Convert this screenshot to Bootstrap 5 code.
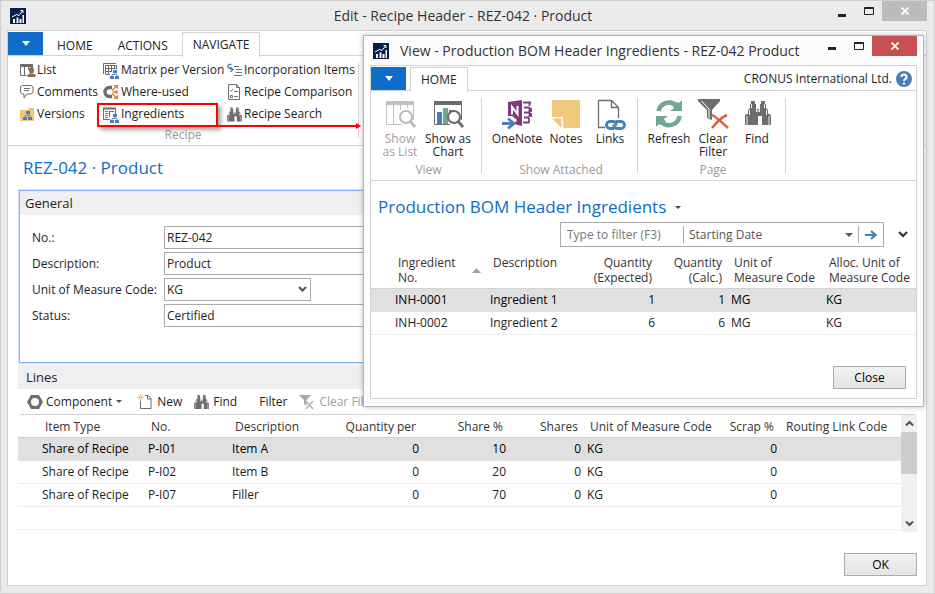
<!DOCTYPE html>
<html lang="en">
<head>
<meta charset="utf-8">
<meta name="viewport" content="width=device-width, initial-scale=1">
<title>Edit - Recipe Header - REZ-042 · Product</title>
<link rel="stylesheet" href="https://cdn.jsdelivr.net/npm/bootstrap@5.3.0/dist/css/bootstrap.min.css">
<style>
:root { --line:#d2d2d2; --field:#ababab; --nav:#0f6cc9; --panel:#efefef; --ink:#1e1e1e; }
body { font-family:"Open Sans","Noto Sans",sans-serif; font-size:12px; line-height:16px; color:var(--ink); background:#ebebeb; }
button { color:inherit; }
svg { display:block; flex:none; }
.plain { background:none; border:0; padding:0; }

/* windows */
.win-main { min-height:100vh; border:1px solid #d0d0d0; padding:0 7px 7px 6px; }
.win-pop { position:absolute; left:363px; right:11px; top:35px; background:#fcfcfc; border:1px solid #b4b4b4; padding:0 6px 7px; box-shadow:0 0 5px rgba(0,0,0,.28); z-index:5; }
.caption { height:29px; font-size:14px; line-height:20px; color:#333; padding-left:3px; }
.win-pop .caption { gap:11px; }
.caption-btns { height:21px; }
.win-btn { width:27px; height:19px; display:flex; align-items:center; justify-content:center; }
.win-close { width:45px; height:20px; color:#fff; background:#bcbcbc; }
.win-pop .win-close { background:#c75050; }
.surface { background:#fff; border:1px solid var(--line); }

/* ribbon */
.tabs { height:25px; border-bottom:1px solid var(--line); padding-top:1px; }
.tabs-main { gap:3px; }
.file-btn { width:35px; background:var(--nav); color:#fff; height:23px; display:flex; align-items:center; justify-content:center; }
.tab { height:24px; padding:0 10px; line-height:26px; color:#222; border:1px solid transparent; border-bottom:0; }
.tab.active { background:#fff; border-color:var(--line); height:25px; line-height:24px; }
.ribbon { height:90px; border-bottom:1px solid var(--line); }
.grp { border-right:1px solid var(--line); margin:7px 0; }
.grp-label { color:#9b9b9b; line-height:16px; text-align:center; }
.cmd-cols { margin:-4px 0 2px; padding-left:4px; }
.cmd { display:flex; align-items:center; gap:2px; height:22px; white-space:nowrap; }
.rib-a { width:83px; }
.rib-b { width:124px; }
.rib-c { width:123px; }
.rib-a .cmd { gap:1px; }
.big { display:flex; flex-direction:column; align-items:center; text-align:center; line-height:13px; gap:2px; height:64px; white-space:nowrap; }
.muted { color:#a0a0a0; }
.marked { position:relative; }
.marked-box { position:absolute; left:-6px; top:0; width:121px; height:24px; border:2px solid #f00; box-shadow:3px 3px 4px rgba(0,0,0,.35); pointer-events:none; }
.marked-arrow { position:absolute; left:114px; top:19px; pointer-events:none; }
.g-view { width:111px; padding-left:5px; }
.g-attach { width:156px; padding-left:3px; }
.g-page { width:148px; padding-left:3px; }
.big-s { width:42px; }
.big-m { width:46px; }
.big-l { width:48px; }
.big-xl { width:52px; }
.tab-pop { margin-left:4px; }

/* page */
.body-pad { padding:10px 9px 9px 10px; }
.body-pad .page-title { padding-left:5px; }
.page-title { color:var(--nav); font-size:17px; line-height:24px; font-weight:400; margin:0; }
.fast-tab { border:1px solid #82b1f5; box-shadow:0 0 0 1px #d4e4fc; height:173px; margin:10px 0 2px 1px; }
.fast-head { background:var(--panel); font-size:13px; height:24px; line-height:24px; padding-left:5px; margin:0; font-weight:400; }
.form-pad { padding:11px 0 0 12px; }
.field-row { display:flex; align-items:center; margin-bottom:3px; }
.field-row label { width:132px; }
.field { height:23px; border:1px solid var(--field); padding:0 2px; color:var(--ink); background-color:#fff; flex:1; min-width:0; border-radius:0; }
.field-sel { flex:none; width:147px; appearance:none; background-repeat:no-repeat; background-position:right 3px center; background-image:url("data:image/svg+xml,%3Csvg xmlns='http://www.w3.org/2000/svg' width='9' height='7'%3E%3Cpath d='M1 1l3.500 3.500L8 1' fill='none' stroke='%23505050' stroke-width='2'/%3E%3C/svg%3E"); }
.tool-row { height:26px; border-bottom:1px solid var(--line); margin:0 2px; padding-left:7px; }
.tool { display:flex; align-items:center; gap:4px; white-space:nowrap; }
.tool-comp { gap:3px; margin-right:15px; }
.tool-new { margin-right:12px; }
.tool-find { margin-right:22px; }
.tool-filter { margin-right:12px; }

.grid { table-layout:fixed; width:100%; margin:0; border-collapse:separate; border-spacing:0; }
.grid th { font-weight:400; padding:1px 6px 0; white-space:nowrap; border-bottom:1px solid var(--line); height:23px; vertical-align:middle; color:#333; }
.grid td { padding:0 3px; height:23px; white-space:nowrap; border-bottom:1px solid #ececec; color:#222; }
.grid .sel td { background:#e0e0e0; border-color:#e0e0e0; color:#000; }
.grid .tall th { line-height:15px; height:34px; vertical-align:top; padding-top:0; }
.c21 { width:21px; }
.c70 { width:70px; }
.c75 { width:75px; }
.c84 { width:84px; }
.c87 { width:87px; }
.c95 { width:95px; }
.c106 { width:106px; }
.c109 { width:109px; }
.scroll { width:16px; height:117px; background:#f0f0f0; flex:none; }
.thumb { height:42px; background:#cdcdcd; }
.scroll-end { height:17px; display:flex; align-items:center; justify-content:center; }
.push { border:1px solid #acacac; background:linear-gradient(#f2f2f2,#e4e4e4); width:73px; height:23px; line-height:20px; color:#000; padding:0; }

/* filter pane */
.pop-head { padding:14px 0 0 7px; }
.filter-row { padding:3px 8px 0 0; gap:14px; margin-bottom:8px; }
.filter { width:324px; height:25px; border:1px solid var(--field); }
.filter input, .filter select { border:0; height:21px; padding:0 5px; color:#555; background-color:#fff; min-width:0; border-radius:0; }
.filter input { width:122px; padding-left:6px; }
.filter input::placeholder { color:#777; opacity:1; }
.filter select { flex:1; height:17px; border-left:1px solid var(--field); border-right:1px solid var(--field); appearance:none; background-repeat:no-repeat; background-position:right 5px center; background-image:url("data:image/svg+xml,%3Csvg xmlns='http://www.w3.org/2000/svg' width='8' height='4'%3E%3Cpath d='M0 0h8l-4 4z' fill='%23555'/%3E%3C/svg%3E"); }
.filter button { width:24px; }
.pop-foot { padding:31px 10px 9px; }
</style>
<script src="https://cdn.jsdelivr.net/npm/bootstrap@5.3.0/dist/js/bootstrap.bundle.min.js"></script>
</head>
<body>
<svg width="0" height="0" class="position-absolute" aria-hidden="true">
  <symbol id="logo" viewBox="0 0 16 16"><path fill="#03214b" d="M0 0h16v16H0z"/><path d="M3 15v-4h2v4zM6.500 15V9.500h2V15zM9.500 15v-4h2v4zM12.500 15V7H14v8z" fill="#fff"/><path d="M2 9l4.500-2.500 2.500 1 3.500-4.500M10.500 2.500H13V5" fill="none" stroke="#fff"/></symbol>
  <symbol id="bino" viewBox="0 0 26 24"><path fill="#6d6d6d" d="M6 0h4v3h1v5h4V3h1V0h4v3h1v4l2 2v4h2l1 2v9h-9v-9h-4v9H0v-9l1-2h2V9l2-2V3h1z"/><path d="M6.500 3v4M19.500 3v4M4.500 9v5M21.500 9v5M2 15v9M24 15v9M11.500 10h3M11.500 3v8M14.500 3v8" fill="none" stroke="#fff" stroke-width=".9"/></symbol>
  <symbol id="org" viewBox="0 0 9 9"><path fill="#4a7ebb" d="M3 0h4v3H3zM0 6h4v3H0zM5 6h4v3H5z"/><path d="M5 3v2M2 6V4.500h5V6" fill="none" stroke="#4a7ebb" stroke-width=".8"/></symbol>
</svg>

<main class="win-main d-flex flex-column">
  <header class="caption d-flex align-items-center">
    <svg width="16" height="16"><use href="#logo"/></svg>
    <span class="flex-fill text-center ps-5 ms-4">Edit - Recipe Header - REZ-042 · Product</span>
    <div class="caption-btns d-flex align-self-start">
      <button class="plain win-btn" aria-label="Minimize"><svg width="8" height="12"><path fill="#222" d="M0 9h8v3H0z"/></svg></button>
      <button class="plain win-btn" aria-label="Maximize"><svg width="10" height="8"><path fill="none" stroke="#222" d="M.5.5h9v7h-9zM0 1.500h10"/></svg></button>
      <button class="plain win-btn win-close" aria-label="Close window"><svg width="8" height="8"><path d="M.5.500l7 7M7.500.500l-7 7" stroke="#fff" stroke-width="1.800"/></svg></button>
    </div>
  </header>

  <div class="surface flex-fill d-flex flex-column">
    <nav class="tabs tabs-main d-flex">
      <button class="plain file-btn" aria-label="Application menu"><svg width="8" height="5"><path fill="#fff" d="M0 0h8L4 5z"/></svg></button>
      <button class="plain tab">HOME</button>
      <button class="plain tab">ACTIONS</button>
      <button class="plain tab active">NAVIGATE</button>
    </nav>
    <section class="ribbon d-flex">
      <div class="grp px-2">
        <div class="d-flex cmd-cols">
          <div class="rib-a">
            <button class="plain cmd"><svg width="16" height="16"><path fill="#6d6d6d" d="M0 2h13v3H0z"/><path d="M.5 4v9.500h6M4.500 4v9M8.500 4v4M12.500 4v2" fill="none" stroke="#6d6d6d"/><path fill="#8f6b50" d="M9 7.500a2.500 2.500 0 0 1 5 0v1.500a2.500 2.500 0 0 1-5 0zM7.500 15v-2l2-1.500h4l2 1.500v2z"/></svg>List</button>
            <button class="plain cmd"><svg width="16" height="16"><path d="M2 1.500h9l2 1.500v5.500l-2 1.500H7l-3 4V10H2L.5 8.500V3z" fill="none" stroke="#6d6d6d"/><path d="M4 4.500h6M4 6.500h5" stroke="#6d6d6d"/></svg>Comments</button>
            <button class="plain cmd"><svg width="16" height="16"><path fill="#edc57c" d="M0 4h7l2-2h5v13H0z"/><g transform="translate(3 5)"><use href="#org" width="9" height="9"/></g></svg>Versions</button>
          </div>
          <div class="rib-b">
            <button class="plain cmd"><svg width="16" height="17"><path d="M.5 12V1.500H13" fill="none" stroke="#6d6d6d"/><path d="M2.500 3.500h11v9h-11zM2.500 6.500h11M2.500 9.500h11M5.500 3.500v9M8.500 3.500v9M11.500 3.500v9" fill="none" stroke="#6d6d6d"/><path fill="#fff" d="M7 14v-4h2V7h5v3h2v7H7z"/><g transform="translate(7 8)"><use href="#org" width="9" height="9"/></g></svg>Matrix per Version</button>
            <button class="plain cmd"><svg width="16" height="16"><path d="M9 3.500H6.500a4.500 4.500 0 0 0 0 9H9" fill="none" stroke="#6d6d6d" stroke-width="3.400"/><path d="M9 6.500l3.500-3.500M9.500 8H13M9 9.500l3.500 3.500" stroke="#e07b26" stroke-width="1.500"/><path fill="#e07b26" d="M10.500 1H15v4.500zM12.500 5.500L15.500 8l-3 2.500zM10.500 15H15v-4.500z"/></svg>Where-used</button>
            <div class="marked">
              <button class="plain cmd"><svg width="16" height="17"><path d="M.5 2.500h12v6M.5 2v11.500H7M6.500 5v6" fill="none" stroke="#6d6d6d"/><path d="M0 2.500h13" stroke="#6d6d6d" stroke-width="2"/><path d="M2 5.500h3M2 7.500h3M2 9.500h3M2 11.500h3" stroke="#d9532c"/><path d="M7 5.500h4" stroke="#6d6d6d"/><g transform="translate(7 8)"><use href="#org" width="9" height="9"/></g></svg>Ingredients</button>
              <div class="marked-box"></div>
              <svg class="marked-arrow" width="145" height="8"><path d="M0 4h140" stroke="#f00" stroke-width="2"/><path fill="#f00" d="M139 1l5 3-5 3z"/></svg>
            </div>
          </div>
          <div class="rib-c">
            <button class="plain cmd"><svg width="15" height="16"><path d="M4.500 2.500h-2a2 2 0 0 0-1 3.500L6 7.500M3.500 5L6 7.500 3.500 10" fill="none" stroke="#4a7ebb" stroke-width="1.400"/><path d="M7 4.500h5M9 7.500h6M9 10.500h6M7 13.500h8" stroke="#6d6d6d" stroke-width="1.200"/></svg>Incorporation Items</button>
            <button class="plain cmd"><svg width="15" height="16"><path d="M1.500.5h8l3 3v12h-11zM9.500.5v3h3" fill="none" stroke="#6d6d6d"/><path d="M3 6.500l1 1 2-2.500M7 7.500h4M3.500 11.500h2v2h-2zM7 12.500h4" fill="none" stroke="#6d6d6d"/></svg>Recipe Comparison</button>
            <button class="plain cmd"><svg width="15" height="15"><use href="#bino"/></svg>Recipe Search</button>
          </div>
        </div>
        <div class="grp-label">Recipe</div>
      </div>
    </section>

    <div class="flex-fill d-flex flex-column body-pad">
      <h1 class="page-title">REZ-042 · Product</h1>
      <section class="fast-tab">
        <h2 class="fast-head">General</h2>
        <form class="form-pad">
          <div class="field-row"><label for="f-no">No.:</label><input id="f-no" class="field" value="REZ-042"></div>
          <div class="field-row"><label for="f-desc">Description:</label><input id="f-desc" class="field" value="Product"></div>
          <div class="field-row"><label for="f-uom">Unit of Measure Code:</label><select id="f-uom" class="field field-sel"><option>KG</option></select></div>
          <div class="field-row"><label for="f-status">Status:</label><input id="f-status" class="field" value="Certified"></div>
        </form>
      </section>
      <section>
        <h2 class="fast-head ps-2">Lines</h2>
        <div class="tool-row d-flex align-items-center">
          <button class="plain tool tool-comp"><svg width="16" height="14"><path fill="#6d6d6d" fill-rule="evenodd" d="M4 0h8l4 7-4 7H4L0 7zM8 3a4 4 0 1 0 0 8 4 4 0 0 0 0-8z"/></svg>Component<svg width="7" height="4"><path fill="#555" d="M1 0h6L4 3z"/></svg></button>
          <button class="plain tool tool-new"><svg width="16" height="16"><path d="M8 1.500h3l3 3v10H3.500V7M10.500 1.500V5H14" fill="none" stroke="#6d6d6d"/><path d="M3.500 0v7M0 3.500h7M1 1l5 5M6 1L1 6" stroke="#edba5e" stroke-width=".8"/></svg>New</button>
          <button class="plain tool tool-find"><svg width="15" height="14"><use href="#bino"/></svg>Find</button>
          <button class="plain tool tool-filter">Filter</button>
          <button class="plain tool muted"><svg width="16" height="16"><path fill="#a9a9a9" d="M0 1h12L7.500 6v6L5 10V6z"/><path d="M7 7l7 8M14 7l-7 8" stroke="#b5b5b5" stroke-width="1.500"/></svg>Clear Filter</button>
        </div>
        <div class="d-flex">
          <div class="flex-fill">
          <table class="grid">
            <colgroup><col class="c21"><col class="c106"><col class="c84"><col class="c106"><col class="c87"><col class="c87"><col class="c75"><col class="c109"><col class="c87"><col></colgroup>
            <thead><tr><th></th><th>Item Type</th><th>No.</th><th>Description</th><th class="text-end">Quantity per</th><th class="text-end">Share %</th><th class="text-end">Shares</th><th>Unit of Measure Code</th><th class="text-end">Scrap %</th><th>Routing Link Code</th></tr></thead>
            <tbody>
              <tr class="sel"><td></td><td>Share of Recipe</td><td>P-I01</td><td>Item A</td><td class="text-end">0</td><td class="text-end">10</td><td class="text-end">0</td><td>KG</td><td class="text-end">0</td><td></td></tr>
              <tr><td></td><td>Share of Recipe</td><td>P-I02</td><td>Item B</td><td class="text-end">0</td><td class="text-end">20</td><td class="text-end">0</td><td>KG</td><td class="text-end">0</td><td></td></tr>
              <tr><td></td><td>Share of Recipe</td><td>P-I07</td><td>Filler</td><td class="text-end">0</td><td class="text-end">70</td><td class="text-end">0</td><td>KG</td><td class="text-end">0</td><td></td></tr>
              <tr><td colspan="10"></td></tr>
            </tbody>
          </table>
          </div>
          <div class="scroll d-flex flex-column" aria-hidden="true">
            <div class="scroll-end"><svg width="9" height="7"><path d="M1 5.500L4.500 2 8 5.500" fill="none" stroke="#505050" stroke-width="2"/></svg></div>
            <div class="thumb"></div>
            <div class="scroll-end mt-auto"><svg width="9" height="7"><path d="M1 1.500L4.500 5 8 1.500" fill="none" stroke="#505050" stroke-width="2"/></svg></div>
          </div>
        </div>
      </section>
      <div class="mt-auto text-end"><button class="push">OK</button></div>
    </div>
  </div>
</main>

<section class="win-pop">
  <header class="caption d-flex align-items-center">
    <svg width="16" height="16"><use href="#logo"/></svg>
    <span class="flex-fill text-nowrap">View - Production BOM Header Ingredients - REZ-042 Product</span>
    <div class="caption-btns d-flex align-self-start">
      <button class="plain win-btn" aria-label="Minimize"><svg width="8" height="8"><path fill="#222" d="M0 5h8v3H0z"/></svg></button>
      <button class="plain win-btn" aria-label="Maximize"><svg width="10" height="8"><path fill="none" stroke="#222" d="M.5.5h9v7h-9zM0 1.500h10"/></svg></button>
      <button class="plain win-btn win-close" aria-label="Close window"><svg width="8" height="8"><path d="M.5.500l7 7M7.500.500l-7 7" stroke="#fff" stroke-width="1.800"/></svg></button>
    </div>
  </header>
  <div class="surface">
    <nav class="tabs d-flex">
      <button class="plain file-btn" aria-label="Application menu"><svg width="8" height="5"><path fill="#fff" d="M0 0h8L4 5z"/></svg></button>
      <button class="plain tab active tab-pop">HOME</button>
      <div class="ms-auto d-flex align-items-center gap-1 pe-1">CRONUS International Ltd.<a href="#help" aria-label="Help"><svg width="16" height="16"><circle cx="8" cy="8" r="8" fill="#4a7ebb"/><path d="M5.500 6a2.500 2.500 0 1 1 3.700 2.200C8.300 8.700 8 9 8 10M8 11.500v2" fill="none" stroke="#fff" stroke-width="2"/></svg></a></div>
    </nav>
    <section class="ribbon d-flex">
      <div class="grp g-view">
        <div class="d-flex">
          <button class="plain big muted big-l"><svg width="32" height="32"><path fill="#c2c2c2" d="M2 3h28v4H2z"/><path d="M2.500 7v19.500H18M9.500 7v19M16.500 7v5M23.500 7v3M29.500 7v15" fill="none" stroke="#c2c2c2"/><circle cx="22" cy="19" r="6" fill="#fff" stroke="#bcbcbc" stroke-width="2.200"/><path d="M26 23l5 6" stroke="#bcbcbc" stroke-width="2.800"/></svg><span>Show<br>as List</span></button>
          <button class="plain big big-l"><svg width="32" height="32"><path fill="#6d6d6d" d="M2 3h28v4H2z"/><path d="M2.500 7v19.500H18M29.500 7v15" fill="none" stroke="#6d6d6d"/><path fill="#4a7ebb" d="M5 14h5v12H5z"/><path fill="#72a795" d="M11 10h5v16h-5z"/><path fill="#4a7ebb" d="M17 12h5v4h-5z"/><circle cx="22" cy="19" r="6" fill="#fff" stroke="#6d6d6d" stroke-width="2.200"/><path d="M26 23l5 6" stroke="#6d6d6d" stroke-width="2.800"/></svg><span>Show as<br>Chart</span></button>
        </div>
        <div class="grp-label">View</div>
      </div>
      <div class="grp g-attach">
        <div class="d-flex justify-content-center">
          <button class="plain big big-xl"><svg width="32" height="32"><path fill="#80397b" d="M7 4l14-2v26l-8-2 3-4-5-4H7z"/><path d="M22 4.500h8M22 24.500h6M23 9.500h5M23 14.500h5M23 19.500h5M28.500 4v4M30 10v4M30 15v4M28 20v5M28.500 9v10" fill="none" stroke="#80397b" stroke-width="1.800"/><path d="M11 16.500V9l5.500 7V8" fill="none" stroke="#fff" stroke-width="2"/><path d="M1 25.500h11M7 20.500l6 5-6 5" fill="none" stroke="#4a7ebb" stroke-width="2.800"/></svg><span>OneNote</span></button>
          <button class="plain big big-m"><svg width="32" height="32"><path fill="#efc87e" d="M2 2h28v28H13.500L12.500 19H2z"/><path fill="#efc87e" d="M2 20.500h9.500V30z"/></svg><span>Notes</span></button>
          <button class="plain big big-s"><svg width="32" height="32"><path d="M4.500 2.500h13l7 7V20M4.500 2v27.500H11M17.500 2.500v7h7" fill="none" stroke="#6d6d6d" stroke-width="1.300"/><path d="M20.500 29.500l-1.500 1h-3a3.500 3.500 0 0 1 0-7h3a3.500 3.500 0 0 1 3.200 4M21.500 24.500l1.500-1h4a3.500 3.500 0 0 1 0 7h-4a3.500 3.500 0 0 1-3.200-4" fill="none" stroke="#4a7ebb" stroke-width="2.800"/></svg><span>Links</span></button>
        </div>
        <div class="grp-label">Show Attached</div>
      </div>
      <div class="grp g-page">
        <div class="d-flex justify-content-center">
          <button class="plain big big-m"><svg width="32" height="32"><path d="M5.500 13A10.500 10.500 0 0 1 23.500 8" fill="none" stroke="#72a795" stroke-width="4.500"/><path fill="#72a795" d="M29 2v11H17l4-3-2-3 5-3 2 1z"/><path d="M26.500 18A10.500 10.500 0 0 1 8.500 24" fill="none" stroke="#72a795" stroke-width="4.500"/><path fill="#72a795" d="M3 29V18h12l-4 3 2 3-5 3-2-1z"/></svg><span>Refresh</span></button>
          <button class="plain big big-s"><svg width="32" height="32"><path fill="#6d6d6d" d="M1 1h22v2l-8 9v10l-5-2v-8L1 3z"/><path d="M4.500 3l7.500 8v9" fill="none" stroke="#fff"/><path d="M15 17c6 3 10 8 16 13" fill="none" stroke="#d9603f" stroke-width="2.500"/><path d="M30 17c-7 3-11 8-15 13" fill="none" stroke="#d9603f" stroke-width="2.500"/></svg><span>Clear<br>Filter</span></button>
          <button class="plain big big-m"><svg width="32" height="32"><use href="#bino" x="4" y="3" width="26" height="24"/></svg><span>Find</span></button>
        </div>
        <div class="grp-label">Page</div>
      </div>
    </section>
    <div class="pop-head d-flex align-items-center">
      <h2 class="page-title">Production BOM Header Ingredients</h2>
      <svg class="ms-2" width="8" height="3"><path fill="#444" d="M1 0h6L4 3z"/></svg>
    </div>
    <div class="d-flex align-items-center justify-content-end filter-row">
      <div class="filter d-flex align-items-center">
        <input type="text" placeholder="Type to filter (F3)" aria-label="Type to filter">
        <select aria-label="Filter field"><option>Starting Date</option></select>
        <button class="plain d-flex justify-content-center" aria-label="Apply filter"><svg width="12" height="10"><path d="M0 5h10M6 1l4.500 4L6 9" fill="none" stroke="#4a7ebb" stroke-width="2.200"/></svg></button>
      </div>
      <button class="plain" aria-label="Expand filter"><svg width="10" height="7"><path d="M1 1l4 4 4-4" fill="none" stroke="#333" stroke-width="2.200"/></svg></button>
    </div>
    <table class="grid">
      <colgroup><col class="c21"><col class="c95"><col class="c84"><col class="c87"><col class="c70"><col class="c95"><col></colgroup>
      <thead><tr class="tall"><th></th><th><div class="d-flex justify-content-between align-items-center"><span>Ingredient<br>No.</span><svg width="9" height="5"><path fill="#a0a0a0" d="M0 5h9L4.500 0z"/></svg></div></th><th>Description</th><th class="text-end">Quantity<br>(Expected)</th><th class="text-end">Quantity<br>(Calc.)</th><th>Unit of<br>Measure Code</th><th>Alloc. Unit of<br>Measure Code</th></tr></thead>
      <tbody>
        <tr class="sel"><td></td><td>INH-0001</td><td>Ingredient 1</td><td class="text-end">1</td><td class="text-end">1</td><td>MG</td><td>KG</td></tr>
        <tr><td></td><td>INH-0002</td><td>Ingredient 2</td><td class="text-end">6</td><td class="text-end">6</td><td>MG</td><td>KG</td></tr>
      </tbody>
    </table>
    <div class="pop-foot text-end"><button class="push">Close</button></div>
  </div>
</section>
</body>
</html>
